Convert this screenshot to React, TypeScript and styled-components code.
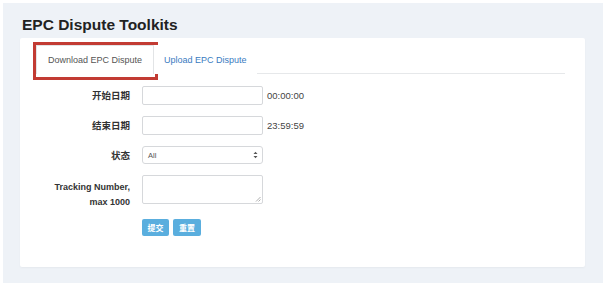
import styled, { createGlobalStyle } from 'styled-components';

const GlobalStyle = createGlobalStyle`
  body {
    margin: 0;
    background: #ffffff;
    font-family: "Liberation Sans", Arial, "Noto Sans CJK SC", sans-serif;
    color: #333;
  }
`;

const Panel = styled.div`
  margin: 3px 0 0 3px;
  width: 600px;
  height: 280px;
  box-sizing: border-box;
  background: #eef2f7;
  padding: 9px 18px 0 17px;
`;

const Title = styled.h1`
  margin: 0 0 0 2px;
  font-size: 15.5px;
  line-height: 26px;
  font-weight: bold;
  color: #222;
`;

const Card = styled.div`
  height: 229px;
  background: #fff;
  border-radius: 2px;
  box-shadow: 0 1px 2px rgba(0, 0, 0, 0.04);
  padding: 6px 20px 0 16px;
  box-sizing: border-box;
`;

const TabBar = styled.div`
  display: flex;
  align-items: flex-end;
  border-bottom: 1px solid #e6e8ea;
  height: 29px;
`;

const Tab = styled.div<{ $active?: boolean }>`
  position: relative;
  height: 29px;
  box-sizing: border-box;
  display: flex;
  align-items: center;
  padding: 0 ${(p) => (p.$active ? '11px' : '9px')};
  font-size: 9px;
  color: ${(p) => (p.$active ? '#555' : '#3a7bbf')};
  background: #fff;
  border: 1px solid ${(p) => (p.$active ? '#e2e4e6' : 'transparent')};
  border-bottom: none;
  margin-bottom: -1px;
`;

// red annotation frame drawn over the active tab
const Highlight = styled.span`
  position: absolute;
  top: -4px;
  left: -4px;
  right: -5px;
  bottom: -6px;
  border: 3px solid #c23b33;
  pointer-events: none;
`;

const Form = styled.div`
  display: flex;
  flex-direction: column;
  gap: 11px;
  padding-top: 12px;
`;

const Row = styled.div<{ $top?: boolean }>`
  display: flex;
  align-items: ${(p) => (p.$top ? 'flex-start' : 'center')};
  gap: 12px;
`;

const Label = styled.div`
  width: 94px;
  text-align: right;
  font-size: 9.5px;
  font-weight: bold;
  line-height: 15px;
  color: #333;
`;

const TrackingLabel = styled(Label)`
  font-size: 9px;
  padding-top: 5px;
`;

const Input = styled.div`
  width: 121px;
  height: 19px;
  box-sizing: border-box;
  border: 1px solid #d6d8db;
  border-radius: 2px;
  background: #fff;
`;

const Suffix = styled.span`
  margin-left: -8px;
  font-size: 9.5px;
  color: #444;
`;

const Select = styled.div`
  width: 121px;
  height: 18px;
  box-sizing: border-box;
  border: 1px solid #d6d8db;
  border-radius: 3px;
  background: #fff;
  display: flex;
  align-items: center;
  justify-content: space-between;
  padding: 0 4px 0 5px;
  font-size: 7.5px;
  color: #555;
`;

const Area = styled.div`
  position: relative;
  width: 121px;
  height: 29px;
  box-sizing: border-box;
  border: 1px solid #d6d8db;
  border-radius: 2px;
  background: #fff;
`;

const Grip = styled.svg`
  position: absolute;
  right: 1px;
  bottom: 1px;
`;

const Buttons = styled.div`
  display: flex;
  gap: 4px;
  margin-left: 106px;
  margin-top: -2px;
`;

const Button = styled.div<{ $w: number }>`
  width: ${(p) => p.$w}px;
  height: 17px;
  border-radius: 2px;
  background: #5aaede;
  color: #fff;
  font-size: 8px;
  font-weight: bold;
  display: flex;
  align-items: center;
  justify-content: center;
  font-family: "Noto Sans CJK SC", sans-serif;
`;

export default function App() {
  return (
    <>
      <GlobalStyle />
      <Panel>
        <Title>EPC Dispute Toolkits</Title>
        <Card>
          <TabBar>
            <Tab $active>
              Download EPC Dispute
              <Highlight />
            </Tab>
            <Tab>Upload EPC Dispute</Tab>
          </TabBar>
          <Form>
            <Row>
              <Label>开始日期</Label>
              <Input />
              <Suffix>00:00:00</Suffix>
            </Row>
            <Row>
              <Label>结束日期</Label>
              <Input />
              <Suffix>23:59:59</Suffix>
            </Row>
            <Row>
              <Label>状态</Label>
              <Select>
                <span>All</span>
                <svg width="5" height="8" viewBox="0 0 5 8">
                  <path d="M0.5 3 L2.5 0.8 L4.5 3 Z M0.5 5 L2.5 7.2 L4.5 5 Z" fill="#555" />
                </svg>
              </Select>
            </Row>
            <Row $top>
              <TrackingLabel>
                Tracking Number,
                <br />
                max 1000
              </TrackingLabel>
              <Area>
                <Grip width="6" height="6" viewBox="0 0 6 6">
                  <path d="M5.5 1 L1 5.5 M5.5 3.5 L3.5 5.5" stroke="#999" strokeWidth="0.8" />
                </Grip>
              </Area>
            </Row>
            <Buttons>
              <Button $w={27}>提交</Button>
              <Button $w={28}>重置</Button>
            </Buttons>
          </Form>
        </Card>
      </Panel>
    </>
  );
}
